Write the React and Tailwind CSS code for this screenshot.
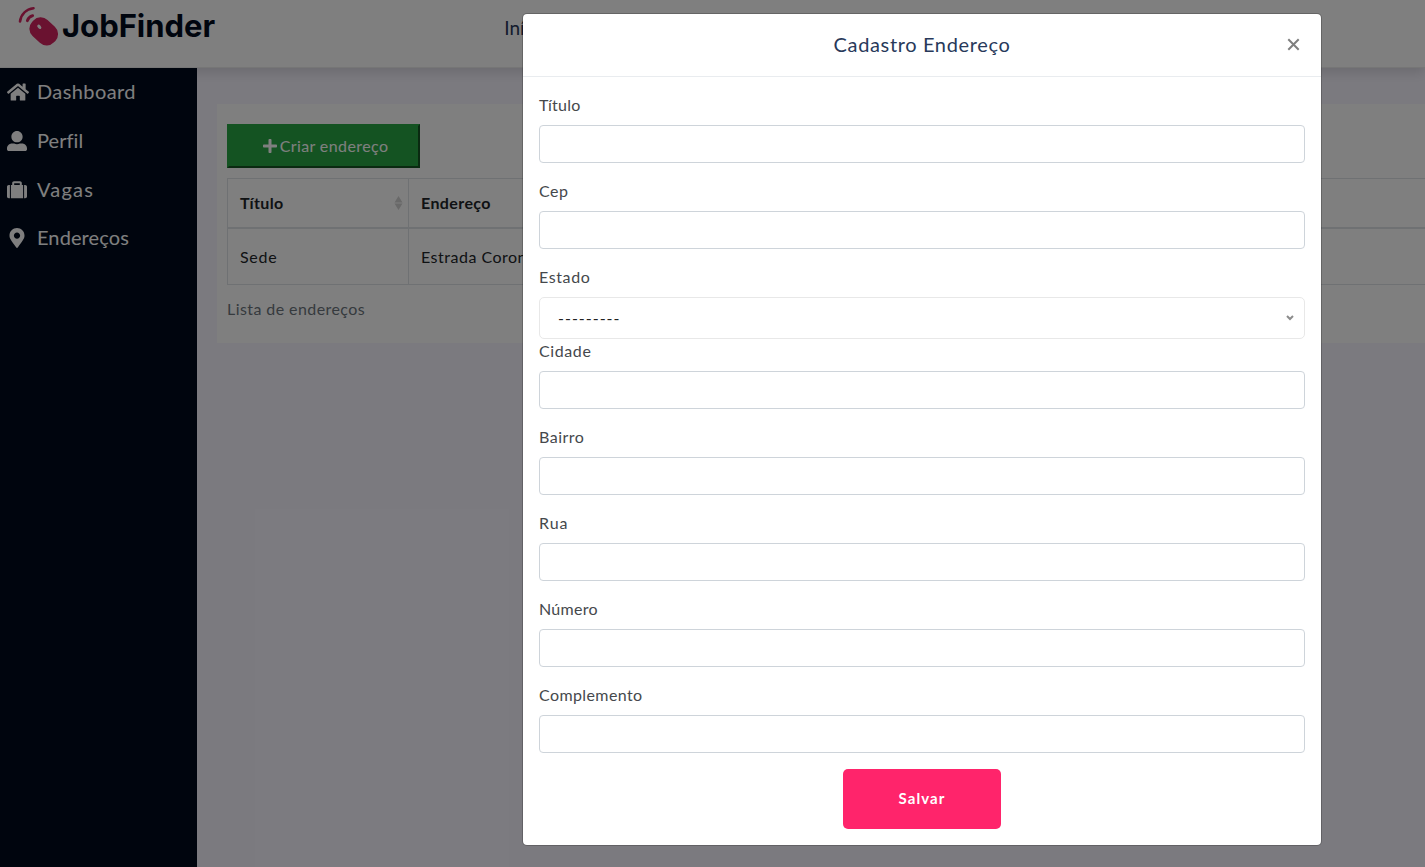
import { FaHome, FaUserAlt, FaMapMarkerAlt, FaPlus } from "react-icons/fa";

function Suitcase({ className }) {
  return (
    <svg viewBox="0 0 20 20" fill="currentColor" className={className}>
      <path d="M1.800 5H2.900V18.200H1.800C.8 18.200 0 17.500 0 16.500V6.800C0 5.800.8 5 1.800 5zM17.100 5H18.200C19.200 5 20 5.800 20 6.800V16.500C20 17.500 19.200 18.200 18.200 18.200H17.100z" />
      <path fillRule="evenodd" d="M3.900 5H5.200V3C5.200 2 6 1.200 7 1.200H13C14 1.200 14.800 2 14.800 3V5H16.100V18.200H3.900zM7.200 5H12.800V3.200H7.200z" />
    </svg>
  );
}

const menu = [
  { label: "Dashboard", icon: FaHome, tracking: "tracking-[0.4px]" },
  { label: "Perfil", icon: FaUserAlt, tracking: "tracking-[0.05px]" },
  { label: "Vagas", icon: Suitcase, tracking: "tracking-[1.2px]" },
  { label: "Endereços", icon: FaMapMarkerAlt, tracking: "tracking-[0.1px]" },
];

function Logo() {
  return (
    <div className="flex pl-[18px] pt-[5px]">
      <svg width="42" height="42" viewBox="0 0 42 42" fill="none" className="shrink-0">
        <path d="M2 16.500C3 9.500 8 4.200 15.500 3.200" stroke="#d42460" strokeWidth="2.600" strokeLinecap="round" />
        <path d="M9.300 15.700C10.200 13 11.800 11.400 14.700 10.600" stroke="#d42460" strokeWidth="2.800" strokeLinecap="round" />
        <rect x="10.700" y="15.400" width="30" height="22" rx="10" transform="rotate(43 25.700 26.400)" fill="#d42460" />
        <ellipse cx="21.300" cy="21.800" rx="2.500" ry="1.600" transform="rotate(48 21.300 21.800)" fill="#fff" />
      </svg>
      <span className="ml-[2px] mt-[1px] font-['Inter',sans-serif] text-[31px] font-bold leading-[40px] text-[#010b1d]">JobFinder</span>
    </div>
  );
}

function Header() {
  return (
    <header className="relative z-10 flex h-[68px] shrink-0 border-b border-[#ececec] bg-white shadow-[0_4px_12px_rgba(0,0,0,0.14)]">
      <Logo />
      <nav className="ml-[289px] pt-[14px] text-[19px] leading-[27px] text-[#28395a]">Início</nav>
    </header>
  );
}

function Sidebar() {
  return (
    <aside className="relative z-20 w-[197px] shrink-0 bg-[#000b1c] text-white">
      {menu.map(({ label, icon: Icon, tracking }) => (
        <div key={label} className="flex h-[48.7px] items-center pl-[7px] text-[20px]">
          <span className="flex w-5 justify-center">
            <Icon className={label === "Dashboard" ? "ml-[2px] h-5 w-[22px] shrink-0" : "size-5 shrink-0"} />
          </span>
          <span className={`mb-[2px] ml-[10px] ${tracking}`}>{label}</span>
        </div>
      ))}
    </aside>
  );
}

function AddressTable() {
  return (
    <div className="mt-[10px] w-[1300px] border border-[#dee2e6] tracking-[0.5px] text-[#212529]">
      <div className="flex h-[50px] border-b-2 border-[#dee2e6] font-bold">
        <div className="flex w-[181px] items-center justify-between border-r border-[#dee2e6] pl-3 pr-[5px]">
          <span className="tracking-[0.4px]">Título</span>
          <svg width="9" height="14" viewBox="0 0 9 14" fill="#d2d2d2">
            <path d="M4.500 0 8.500 6.500H.5zM4.500 14 .5 7.500h8z" />
          </svg>
        </div>
        <div className="flex items-center pl-3 tracking-[0.4px]">Endereço</div>
      </div>
      <div className="flex h-[55px]">
        <div className="flex w-[181px] items-center border-r border-[#dee2e6] pl-3 tracking-[0.7px]">Sede</div>
        <div className="flex items-center pl-3">Estrada Coronel</div>
      </div>
    </div>
  );
}

function Main() {
  return (
    <main className="min-w-0 flex-1 bg-[#f7f5ff] pl-5 pt-9">
      <section className="h-[239px] overflow-hidden bg-white pl-[10px] pt-5">
        <button className="flex h-11 w-[193px] items-center justify-center border-2 border-[#28a745] border-b-[#145523] border-r-[#145523] bg-[#28a745] pl-[3px] tracking-[0.4px] text-white">
          <FaPlus className="mr-[2px] size-4" />
          Criar endereço
        </button>
        <AddressTable />
        <p className="mt-[11px] leading-[26px] tracking-[0.42px] text-[#6c757d]">Lista de endereços</p>
      </section>
    </main>
  );
}

function Field({ label, tracking }) {
  return (
    <label className="mb-4 block">
      <span className={`mb-2 block leading-6 ${tracking}`}>{label}</span>
      <input className="block h-[38px] w-full rounded border border-[#ced4da] bg-white" />
    </label>
  );
}

function AddressModal() {
  return (
    <div role="dialog" className="mt-[13px] flex h-[833px] w-[800px] flex-col self-start rounded-[5px] border border-black/20 bg-white bg-clip-padding">
      <div className="relative flex h-[63px] items-center justify-center border-b border-[#e9ecef]">
        <h5 className="mb-[2px] text-[20px] tracking-[0.640px] text-[#28395a]">Cadastro Endereço</h5>
        <svg width="15" height="15" viewBox="0 0 15 15" className="absolute right-5 top-[23px]" stroke="#7f7f7f" strokeWidth="2">
          <path d="M2.300 2.300l10.400 10.400M12.700 2.300l-10.400 10.400" />
        </svg>
      </div>
      <form className="flex flex-col px-4 pt-4 text-[#45484c]">
        <Field label="Título" tracking="tracking-[0.2px]" />
        <Field label="Cep" tracking="tracking-[0.5px]" />
        <span className="mb-2 block leading-6 tracking-[0.6px]">Estado</span>
        <div className="flex h-[42px] items-center justify-between rounded-[5px] border border-[#e8e8e8] pl-[18px] pr-[10px] tracking-[1px] text-[#222]">
          <span>---------</span>
          <svg width="8" height="6" viewBox="0 0 8 6" fill="none" stroke="#8c8c8c" strokeWidth="2">
            <path d="M1 1l3 3 3-3" />
          </svg>
        </div>
        <Field label="Cidade" tracking="tracking-[0.6px]" />
        <Field label="Bairro" tracking="tracking-[0.5px]" />
        <Field label="Rua" tracking="tracking-[1px]" />
        <Field label="Número" tracking="tracking-[0.3px]" />
        <Field label="Complemento" tracking="tracking-[0.4px]" />
        <button type="button" className="h-[60px] w-[158px] self-center rounded-[5px] bg-[#ff246b] pb-[2px] text-[15px] font-bold tracking-[1.100px] text-white">
          Salvar
        </button>
      </form>
    </div>
  );
}

export default function App() {
  return (
    <div className="relative flex h-[867px] w-[1425px] flex-col overflow-hidden font-['Lato',sans-serif] text-[16px]">
      <Header />
      <div className="flex flex-1">
        <Sidebar />
        <Main />
      </div>
      <div className="absolute inset-0 z-30 flex bg-black/50 pl-[522px]">
        <AddressModal />
      </div>
    </div>
  );
}
